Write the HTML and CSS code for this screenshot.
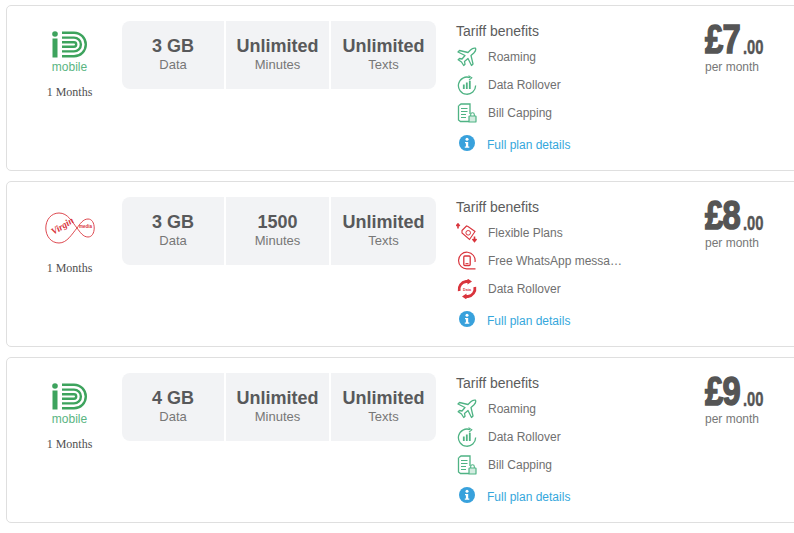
FILE: index.html
```html
<!DOCTYPE html>
<html lang="en">
<head>
<meta charset="utf-8">
<title>Mobile plans</title>
<link rel="stylesheet" href="styles.css">
</head>
<body>
<svg class="defs" aria-hidden="true">
  <symbol id="id-logo" viewBox="0 0 36 27">
    <circle cx="3" cy="3" r="2.8" fill="#3da35d"/>
    <rect x="0.5" y="7.5" width="5" height="19" fill="#3da35d"/>
    <g fill="none" stroke="#3da35d" stroke-width="2.4">
      <path d="M10 1.7H22A11.8 11.8 0 0 1 22 25.3H10"/>
      <path d="M10 6.6H22A6.9 6.9 0 0 1 22 20.4H10"/>
      <path d="M10 11.3H22A2.2 2.2 0 0 1 22 15.7H10"/>
    </g>
  </symbol>
  <symbol id="virgin-logo" viewBox="0 0 50 32">
    <path d="M32 16C27 10 23 1 14 1C6 1 .8 8 .8 16C.8 24 6 31 14 31C22 31 27 22 32 16C35 12 38 7 43 7C47 7 49.200 11 49.200 16C49.200 21 47 25 43 25C38 25 35 20 32 16Z" fill="none" stroke="#d9343c" stroke-width=".9"/>
  </symbol>
  <symbol id="plane" viewBox="0 0 20 20">
    <path d="M18.500 1.200C17 .8 15 1.500 13.500 3L11 5.500 2.500 3.500 1 5 8 8.500 5 12 2.500 11.500 1.200 12.800 4.500 15 6.700 18.500 8 17.200 7.500 14.500 11 11.500 14.500 18.500 16 17 14 8.500 16.800 6C18.300 4.500 19.200 2.800 18.500 1.200Z" fill="none" stroke="#4fb384" stroke-width="1.300" stroke-linejoin="round"/>
  </symbol>
  <symbol id="rollover" viewBox="0 0 20 20">
    <path d="M13 2.600A8.600 8.600 0 1 0 18.600 10.500" fill="none" stroke="#4fb384" stroke-width="1.300"/>
    <path d="M11.500 .6L14.800 2.800 12 5.200" fill="none" stroke="#4fb384" stroke-width="1.100"/>
    <path d="M6.800 9.500V14M9.800 7.500V14M12.800 5.800V14" stroke="#4fb384" stroke-width="1.800"/>
  </symbol>
  <symbol id="bill" viewBox="0 0 20 20">
    <path d="M2 2.500 4 1H13V11M12 18.500H3.500L1.500 17V2.500" fill="none" stroke="#4fb384" stroke-width="1.300"/>
    <path d="M4 5.500H10.500M4 8.500H10.500M4 11.500H9M4 14.500H9" stroke="#4fb384" stroke-width="1.100"/>
    <rect x="12" y="13" width="7" height="6" rx=".6" fill="#4fb384" fill-opacity=".25" stroke="#4fb384" stroke-width="1.200"/>
    <path d="M13.700 13V11.500A1.800 1.800 0 0 1 17.300 11.500V13" fill="none" stroke="#4fb384" stroke-width="1.100"/>
  </symbol>
  <symbol id="sim" viewBox="0 0 22 20">
    <path d="M6 7.500 10.500 3 12 3.500 19 8.500 13.500 16.500 6 10Z" fill="#fff" stroke="#d9343c" stroke-width="1.100"/>
    <circle cx="12.200" cy="9.800" r="2.300" fill="none" stroke="#d9343c" stroke-width="1"/>
    <path d="M2 1.500V5.500M.3 3 2 1 3.700 3M18.500 13.500V18M16.500 16 18.500 18.500 20.500 16" fill="none" stroke="#d9343c" stroke-width="1.600"/>
  </symbol>
  <symbol id="whatsapp" viewBox="0 0 20 20">
    <path d="M18.500 17.800H10.500A8.300 8.300 0 1 1 18 11" fill="none" stroke="#d9343c" stroke-width="1.200"/>
    <rect x="6.800" y="5" width="6.400" height="9.500" rx="1" fill="none" stroke="#d9343c" stroke-width="1.300"/>
    <path d="M8.500 12.600H11.500" stroke="#d9343c" stroke-width="1"/>
  </symbol>
  <symbol id="data-red" viewBox="0 0 20 20">
    <path d="M2.200 12A8 8 0 0 1 9 2.500H12M17.800 8A8 8 0 0 1 11 17.500H8" fill="none" stroke="#d9343c" stroke-width="2.800"/>
    <path d="M10.500 -.5 15 2.500 10.500 5.500ZM9.500 14.500 5 17.500 9.500 20.500Z" fill="#d9343c"/>
    <text x="10" y="11.500" text-anchor="middle" class="data-label">Data</text>
  </symbol>
  <symbol id="info" viewBox="0 0 16 16">
    <circle cx="8" cy="8" r="8" fill="#38a1dc"/>
    <circle cx="8" cy="4.200" r="1.500" fill="#fff"/>
    <path d="M6 7H9.200V11.500H10.300V12.800H5.800V11.500H6.900V8.300H6Z" fill="#fff"/>
  </symbol>
</svg>

<main class="plans">
  <article class="card">
    <div class="provider">
      <div class="brand brand-id">
        <svg class="id-mark"><use href="#id-logo"/></svg>
        <span class="id-word">mobile</span>
      </div>
      <p class="term">1 Months</p>
    </div>
    <div class="stats">
      <div class="stat stat-a"><strong>3 GB</strong><span>Data</span></div>
      <div class="stat stat-b"><strong>Unlimited</strong><span>Minutes</span></div>
      <div class="stat stat-c"><strong>Unlimited</strong><span>Texts</span></div>
    </div>
    <div class="benefits">
      <h3>Tariff benefits</h3>
      <ul>
        <li><svg class="bicon"><use href="#plane"/></svg><span>Roaming</span></li>
        <li><svg class="bicon"><use href="#rollover"/></svg><span>Data Rollover</span></li>
        <li><svg class="bicon"><use href="#bill"/></svg><span>Bill Capping</span></li>
      </ul>
      <a class="details" href="#"><svg class="info"><use href="#info"/></svg>Full plan details</a>
    </div>
    <div class="price">
      <div class="amount"><span class="big">£7</span><span class="pence">.00</span></div>
      <div class="per">per month</div>
    </div>
  </article>

  <article class="card">
    <div class="provider">
      <div class="brand brand-virgin">
        <svg class="virgin-mark"><use href="#virgin-logo"/></svg>
        <span class="virgin-word">Virgin</span>
        <span class="media-word">media</span>
      </div>
      <p class="term">1 Months</p>
    </div>
    <div class="stats">
      <div class="stat stat-a"><strong>3 GB</strong><span>Data</span></div>
      <div class="stat stat-b"><strong>1500</strong><span>Minutes</span></div>
      <div class="stat stat-c"><strong>Unlimited</strong><span>Texts</span></div>
    </div>
    <div class="benefits">
      <h3>Tariff benefits</h3>
      <ul>
        <li><svg class="bicon bicon-wide"><use href="#sim"/></svg><span>Flexible Plans</span></li>
        <li><svg class="bicon"><use href="#whatsapp"/></svg><span>Free WhatsApp messa…</span></li>
        <li><svg class="bicon"><use href="#data-red"/></svg><span>Data Rollover</span></li>
      </ul>
      <a class="details" href="#"><svg class="info"><use href="#info"/></svg>Full plan details</a>
    </div>
    <div class="price">
      <div class="amount"><span class="big">£8</span><span class="pence">.00</span></div>
      <div class="per">per month</div>
    </div>
  </article>

  <article class="card">
    <div class="provider">
      <div class="brand brand-id">
        <svg class="id-mark"><use href="#id-logo"/></svg>
        <span class="id-word">mobile</span>
      </div>
      <p class="term">1 Months</p>
    </div>
    <div class="stats">
      <div class="stat stat-a"><strong>4 GB</strong><span>Data</span></div>
      <div class="stat stat-b"><strong>Unlimited</strong><span>Minutes</span></div>
      <div class="stat stat-c"><strong>Unlimited</strong><span>Texts</span></div>
    </div>
    <div class="benefits">
      <h3>Tariff benefits</h3>
      <ul>
        <li><svg class="bicon"><use href="#plane"/></svg><span>Roaming</span></li>
        <li><svg class="bicon"><use href="#rollover"/></svg><span>Data Rollover</span></li>
        <li><svg class="bicon"><use href="#bill"/></svg><span>Bill Capping</span></li>
      </ul>
      <a class="details" href="#"><svg class="info"><use href="#info"/></svg>Full plan details</a>
    </div>
    <div class="price">
      <div class="amount"><span class="big">£9</span><span class="pence">.00</span></div>
      <div class="per">per month</div>
    </div>
  </article>
</main>
</body>
</html>
```
FILE: styles.css
```css
* { box-sizing: border-box; }
html, body { margin: 0; height: 533px; overflow: hidden; background: #fff; }
body { font-family: "Liberation Sans", Arial, sans-serif; color: #555; }
.defs { width: 0; height: 0; display: block; }
.plans { display: flex; flex-direction: column; gap: 10px; padding: 5px 0 0 6px; width: 830px; }
.card {
  display: flex; height: 166px; width: 824px;
  border: 1px solid #dfdfdf; border-radius: 5px;
  padding: 15px 0 0 0; background: #fff;
}
.provider { width: 115px; flex: none; padding-left: 10px; display: flex; flex-direction: column; align-items: center; }
.brand { height: 54px; width: 100%; display: flex; flex-direction: column; align-items: center; position: relative; }
.id-mark { width: 36px; height: 27px; margin-top: 10px; margin-left: 1px; }
.id-word { color: #5ab582; font-size: 12px; line-height: 14px; margin-top: 2px; }
.virgin-mark { width: 50px; height: 32px; position: absolute; left: 28px; top: 15px; }
.virgin-word {
  position: absolute; left: 33px; top: 23px; font: italic 700 9.500px/12px "Liberation Serif", serif;
  color: #d9343c; transform: rotate(-32deg);
}
.media-word { position: absolute; left: 62px; top: 26px; font-size: 4.500px; font-weight: 700; line-height: 8px; color: #d9343c; }
.term { margin: 9px 0 0; font: 12px/16px "Liberation Serif", serif; color: #505050; }
.stats { display: flex; gap: 2px; width: 314px; height: 68px; flex: none; }
.stat {
  background: #f2f3f5; display: flex; flex-direction: column; align-items: center;
  padding-top: 14px;
}
.stat-a { width: 102px; border-radius: 8px 0 0 8px; }
.stat-b { width: 103px; }
.stat-c { width: 105px; border-radius: 0 8px 8px 0; }
.stat strong { font-size: 18px; line-height: 22px; color: #58595b; }
.stat span { font-size: 13px; line-height: 15px; color: #777; }
.benefits { width: 269px; flex: none; padding-left: 20px; }
.benefits h3 { margin: 1px 0 0; font-size: 14px; font-weight: 400; line-height: 18px; color: #5c5c5c; }
.benefits ul { list-style: none; margin: 3px 0 0; padding: 0; }
.benefits li { display: flex; align-items: center; height: 28px; font-size: 12px; color: #707070; }
.bicon { width: 20px; height: 20px; margin-left: 1px; margin-right: 11px; flex: none; }
.bicon-wide { width: 22px; margin-left: 0; margin-right: 10px; }
.data-label { font-size: 3.600px; font-weight: 700; fill: #d9343c; }
.details { display: flex; align-items: center; height: 20px; margin-top: 8px; font-size: 12px; color: #35a7dc; text-decoration: none; }
.info { width: 16px; height: 16px; margin: -4px 12px 0 3px; flex: none; }
.price { display: flex; flex-direction: column; }
.amount { display: flex; align-items: flex-end; height: 36px; color: #555; }
.big {
  font: 700 41px/36px "Liberation Sans Narrow", "Liberation Sans", sans-serif;
  -webkit-text-stroke: 1.500px #555;
  transform: scaleX(.8); transform-origin: left bottom; width: 38px; display: block; letter-spacing: -1px;
}
.pence {
  font: 700 20px/20px "Liberation Sans Narrow", "Liberation Sans", sans-serif;
  -webkit-text-stroke: .4px #555; display: block; transform: scaleX(.74); transform-origin: left bottom;
}
.per { font-size: 12px; line-height: 14px; color: #777; margin-top: 3px; }
```
